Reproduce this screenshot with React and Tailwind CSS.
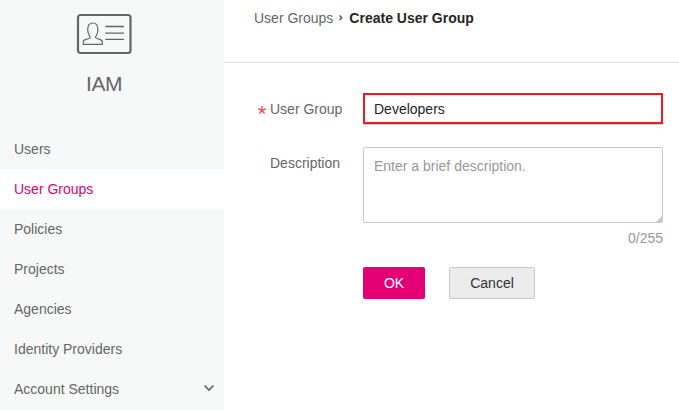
const items = ["Users", "User Groups", "Policies", "Projects", "Agencies", "Identity Providers", "Account Settings"];

function IdCardIcon() {
  return (
    <svg className="mt-[13px] h-[42px] w-14" viewBox="0 0 56 42" fill="none" stroke="#666666">
      <rect x="2" y="2" width="52.500" height="38" rx="2.500" strokeWidth="2.200" />
      <path
        d="M7.300 31.300V28.600c0-.8.600-1.300 1.500-1.700l4.300-1.600c1.200-.5 1.300-1.200.5-2.200-1.300-1.600-1.900-3.400-1.900-6.600 0-4.300 1.800-6.500 5.100-6.500s5.100 2.200 5.100 6.500c0 3.200-.6 5-1.900 6.600-.8 1-.7 1.700.5 2.200l4.300 1.600c.9.400 1.500.9 1.500 1.700v2.700z"
        strokeWidth="1.200"
      />
      <path d="M29.300 13.500H48M29.300 20.100H48M29.300 26.300H48" strokeWidth="1.300" />
    </svg>
  );
}

function Sidebar() {
  return (
    <aside className="flex h-[410px] w-56 shrink-0 flex-col bg-[#f7f9f8] text-[#666666]">
      <div className="flex h-[129px] flex-col items-center pr-4">
        <IdCardIcon />
        <h1 className="mt-[14px] text-[21px] leading-[30px] tracking-[-0.5px]">IAM</h1>
      </div>
      <nav>
        {items.map((item) => (
          <a
            key={item}
            className={`flex h-10 items-center justify-between pr-[9px] pl-[14px] ${item === "User Groups" ? "bg-white text-[#e20074]" : ""}`}
          >
            {item}
            {item === "Account Settings" && (
              <svg className="mb-[3px] h-3 w-3" viewBox="0 0 12 12" fill="none" stroke="#666666" strokeWidth="1.7">
                <path d="m1.500 3.500 4.500 4.500L10.500 3.500" />
              </svg>
            )}
          </a>
        ))}
      </nav>
    </aside>
  );
}

export default function App() {
  return (
    <div className="flex h-[410px] w-[679px] overflow-hidden bg-white font-['Liberation_Sans',Arial,sans-serif] text-sm text-[#666666]">
      <Sidebar />
      <main className="flex-1">
        <header className="flex h-[63px] items-start border-b border-[#dfdfdf] pt-2 pl-[30px]">
          <span>User Groups</span>
          <svg className="mx-[5px] mt-[6px] h-2 w-[6px]" viewBox="0 0 6 8" fill="none" stroke="#555555" strokeWidth="1.4">
            <path d="m1.500 1.500 2.300 2.300-2.300 2.300" />
          </svg>
          <span className="font-bold text-[#252525]">Create User Group</span>
        </header>
        <form className="pt-[30px] pl-[34px]">
          <div className="flex h-[54px] items-start">
            <label className="flex h-8 w-[105px] items-center">
              <svg className="mt-px mr-1 h-2 w-2" viewBox="0 0 8 8" stroke="#ff5050" strokeWidth="1.4">
                <path d="M4 0v4M4 4 0 2.900M4 4l4-1.100M4 4 1.500 7.700M4 4l2.500 3.700" />
              </svg>
              User Group
            </label>
            <input
              className="h-[31px] w-[300px] border-2 border-[#ed1c24] px-[9px] text-[#252525] shadow-[0_1px_0_#cccccc] outline-none"
              defaultValue="Developers"
            />
          </div>
          <div className="flex items-start">
            <label className="w-[105px] pt-[6px] pl-3">Description</label>
            <div className="w-[300px]">
              <div className="relative h-[76px]">
                <textarea
                  className="block h-[76px] w-[300px] resize-none rounded-xs border border-[#c8c8c8] px-[10px] py-2 outline-none placeholder:text-[#999999]"
                  placeholder="Enter a brief description."
                />
                <svg className="absolute right-px bottom-px h-[6px] w-[6px]" viewBox="0 0 6 6" fill="#c8c8c8">
                  <path d="M6 0v6H0z" />
                </svg>
              </div>
              <div className="pt-[5px] text-right text-[#999999]">0/255</div>
              <div className="mt-[19px] flex gap-6">
                <button type="button" className="h-8 w-[62px] rounded-xs bg-[#e20074] text-white">OK</button>
                <button type="button" className="h-8 w-[86px] rounded-xs border border-[#c8c8c8] bg-[#ececec] text-[#333333]">Cancel</button>
              </div>
            </div>
          </div>
        </form>
      </main>
    </div>
  );
}
